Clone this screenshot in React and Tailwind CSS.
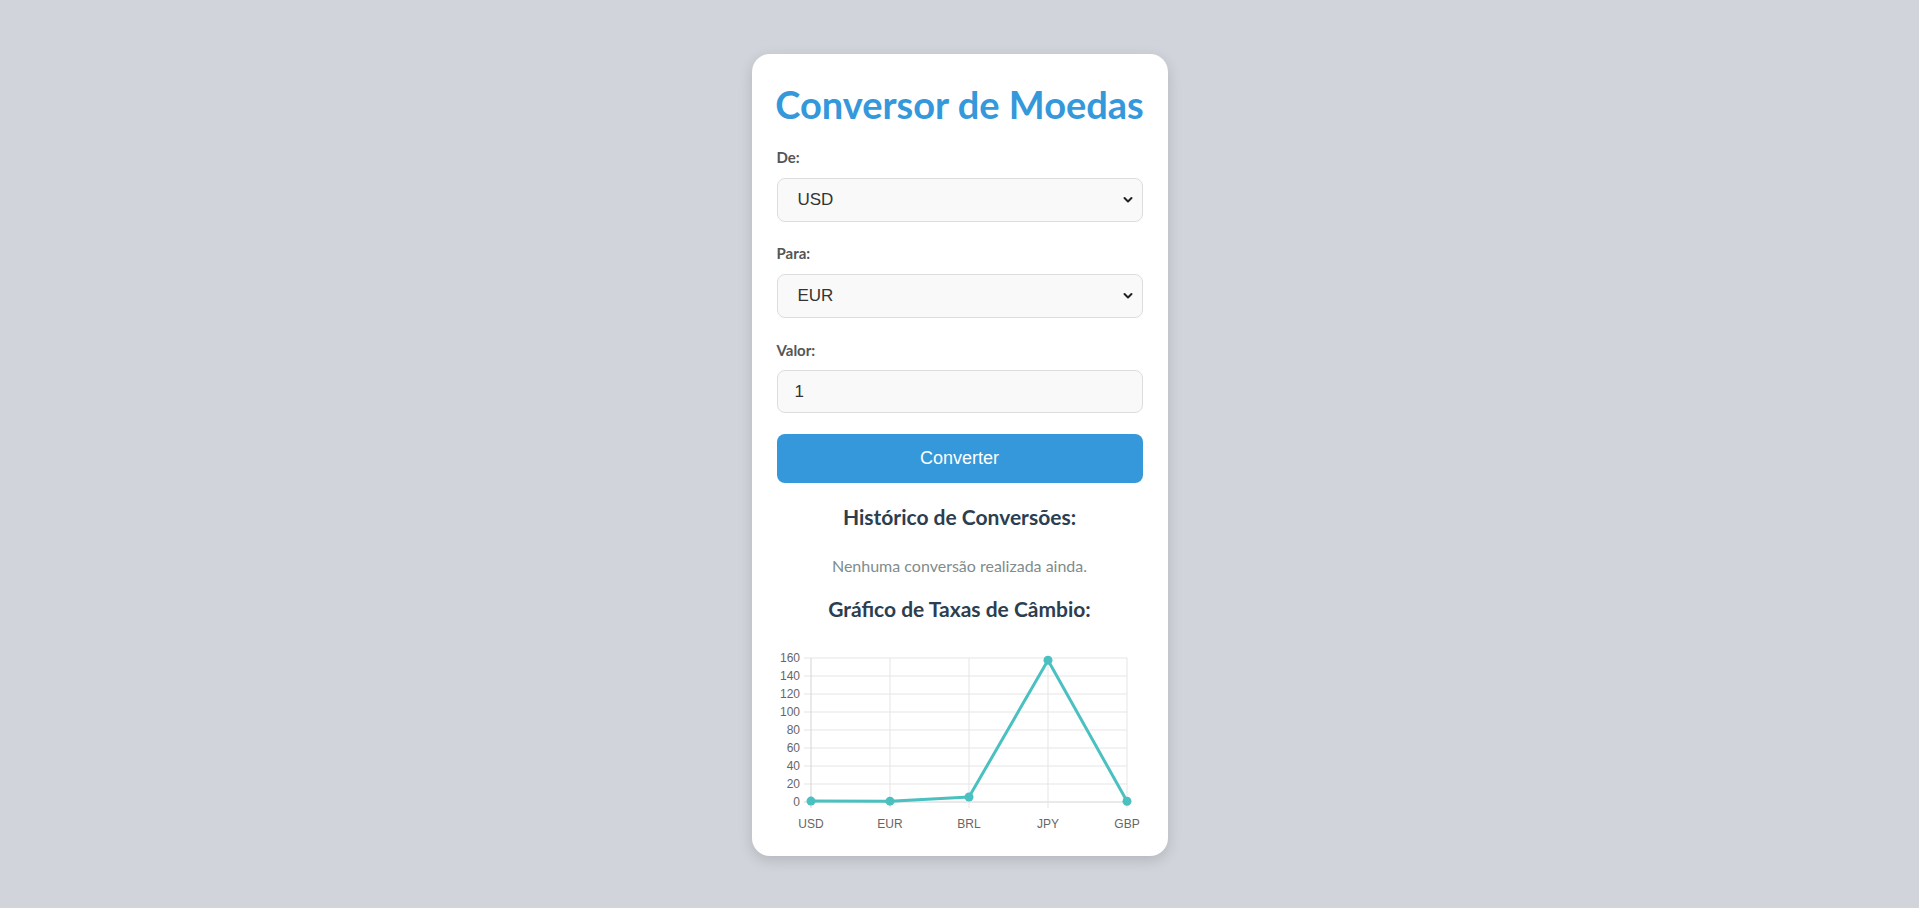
import { useState } from "react";

const rates = [
  { code: "USD", value: 1 },
  { code: "EUR", value: 0.92 },
  { code: "BRL", value: 5.5 },
  { code: "JPY", value: 157.6 },
  { code: "GBP", value: 0.79 },
];

function Chevron() {
  return (
    <svg className="pointer-events-none absolute right-[10px] top-1/2 -translate-y-1/2" width="10" height="7" viewBox="0 0 10 7">
      <path d="M1.5 1.5 L5 5 L8.5 1.5" fill="none" stroke="#222" strokeWidth="2" strokeLinecap="round" strokeLinejoin="round" />
    </svg>
  );
}

function Select({ value, onChange }) {
  return (
    <div className="relative mt-[11px]">
      <select
        value={value}
        onChange={(e) => onChange(e.target.value)}
        className="block h-[44px] w-full appearance-none rounded-[8px] border border-[#dddddd] bg-[#f9f9f9] pl-[20px] text-[17px] text-[#333] outline-none"
        style={{ fontFamily: '"Liberation Sans", Arial, sans-serif' }}
      >
        {rates.map((r) => (
          <option key={r.code} value={r.code}>{r.code}</option>
        ))}
      </select>
      <Chevron />
    </div>
  );
}

function Chart() {
  // local coords: svg left = card content left
  const xs = [34, 113, 192, 271, 350];
  const y0 = 162;
  const scale = 0.9;
  const ticks = [160, 140, 120, 100, 80, 60, 40, 20, 0];
  const pts = rates.map((r, i) => [xs[i], y0 - r.value * scale]);
  return (
    <svg width="366" height="190" viewBox="0 0 366 190" className="block" style={{ fontFamily: '"Liberation Sans", Arial, sans-serif' }}>
      {ticks.map((t) => {
        const y = y0 - t * scale;
        return (
          <g key={t}>
            <line x1="27" x2="350" y1={y} y2={y} stroke={t === 0 ? "#d4d4d4" : "#e5e5e5"} strokeWidth="1" />
            <text x="23" y={y + 4} textAnchor="end" fontSize="12" fill="#666">{t}</text>
          </g>
        );
      })}
      {xs.map((x, i) => (
        <g key={x}>
          <line x1={x} x2={x} y1={18} y2={y0 + 6} stroke={i === 0 ? "#d4d4d4" : "#e5e5e5"} strokeWidth="1" />
          <text x={x} y="188" textAnchor="middle" fontSize="12" fill="#666">{rates[i].code}</text>
        </g>
      ))}
      <polyline points={pts.map((p) => p.join(",")).join(" ")} fill="none" stroke="#4bc0c0" strokeWidth="3" strokeLinejoin="round" />
      {pts.map((p, i) => (
        <circle key={i} cx={p[0]} cy={p[1]} r="4.5" fill="#4bc0c0" />
      ))}
    </svg>
  );
}

export default function App() {
  const [from, setFrom] = useState("USD");
  const [to, setTo] = useState("EUR");
  const [amount, setAmount] = useState("1");

  return (
    <div className="flex min-h-screen justify-center bg-[#d1d5db] pt-[54px]" style={{ fontFamily: 'Lato, "Open Sans", sans-serif' }}>
      <div className="mb-[52px] flex h-fit w-[416px] flex-col rounded-[18px] bg-white px-[25px] pb-[26px] pt-[28px] shadow-[0_4px_14px_rgba(0,0,0,0.15)]">
        <h1 className="-mx-[12px] whitespace-nowrap text-center text-[38px] font-bold leading-[44px] text-[#3498db]">Conversor de Moedas</h1>

        <label className="mt-[21px] text-[15px] font-bold leading-[20px] text-[#555]">De:</label>
        <Select value={from} onChange={setFrom} />

        <label className="mt-[21px] text-[15px] font-bold leading-[20px] text-[#555]">Para:</label>
        <Select value={to} onChange={setTo} />

        <label className="mt-[22px] text-[15px] font-bold leading-[20px] text-[#555]">Valor:</label>
        <input
          value={amount}
          onChange={(e) => setAmount(e.target.value)}
          className="mt-[10px] h-[43px] w-full rounded-[8px] border border-[#dddddd] bg-[#f9f9f9] pl-[17px] text-[17px] text-[#333] outline-none"
          style={{ fontFamily: '"Liberation Sans", Arial, sans-serif' }}
        />

        <button
          className="mt-[21px] h-[49px] w-full rounded-[8px] bg-[#3498db] text-[18px] text-white"
          style={{ fontFamily: '"Liberation Sans", Arial, sans-serif' }}
        >
          Converter
        </button>

        <h3 className="mt-[22px] text-center text-[21px] font-bold leading-[24px] text-[#2c3e50]">Histórico de Conversões:</h3>
        <p className="mt-[27px] text-center text-[16px] leading-[20px] text-[#7f8c8d]">Nenhuma conversão realizada ainda.</p>

        <h3 className="mt-[21px] text-center text-[21px] font-bold leading-[24px] text-[#2c3e50]">Gráfico de Taxas de Câmbio:</h3>
        <div className="mt-[19px]">
          <Chart />
        </div>
      </div>
    </div>
  );
}
